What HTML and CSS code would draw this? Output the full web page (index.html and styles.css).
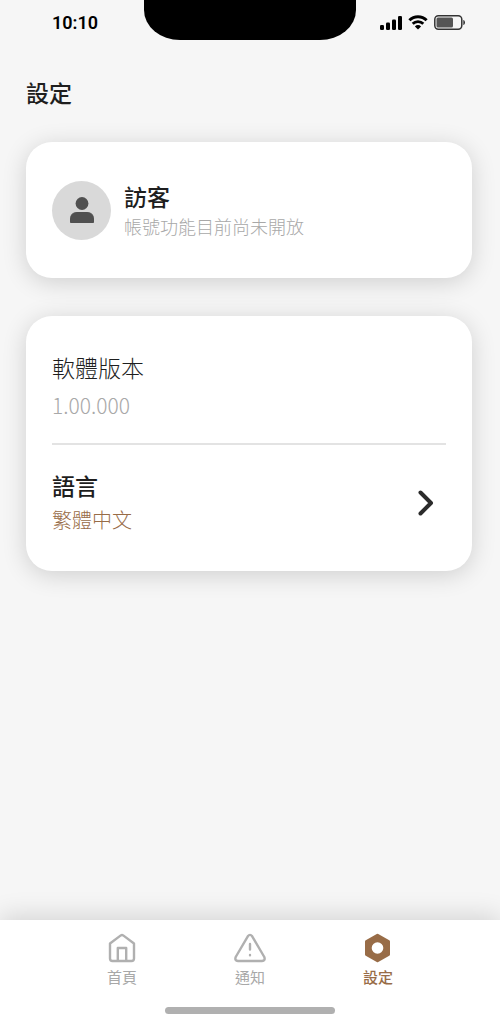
FILE: index.html
```
<!DOCTYPE html>
<html lang="zh-Hant">
<head>
  <meta charset="UTF-8">
  <meta name="viewport" content="width=device-width, initial-scale=1.0">
  <title>設定</title>
  <link rel="stylesheet" href="styles.css">
</head>
<body>
  <div class="status-bar">
    <span class="time">10:10</span>
    <div class="notch"></div>
    <div class="status-icons">
      <svg width="22" height="14" viewBox="0 0 22 14">
        <rect x="0" y="9" width="4" height="5" rx="1.3" />
        <rect x="6" y="6.5" width="4" height="7.5" rx="1.3" />
        <rect x="12" y="3.5" width="4" height="10.5" rx="1.3" />
        <rect x="18" y="0" width="4" height="14" rx="1.3" />
      </svg>
      <svg width="20" height="15" viewBox="0 0 20 15">
        <path d="M1.4 5.2 A12.2 12.2 0 0 1 18.6 5.2" fill="none" stroke="#000" stroke-width="3" />
        <path d="M4.7 8.8 A7.5 7.5 0 0 1 15.3 8.8" fill="none" stroke="#000" stroke-width="2.8" />
        <path d="M6.9 11.4 A4.4 4.4 0 0 1 13.1 11.4 L10 14.6 Z" />
      </svg>
      <svg width="32" height="15" viewBox="0 0 32 15">
        <rect x="0.8" y="0.8" width="27" height="13.4" rx="3.6" fill="none" stroke="#333" stroke-width="1.5" />
        <rect x="2.5" y="2.6" width="16.5" height="9.8" rx="1.5" fill="#555" />
        <path d="M29.3 5 C31.6 5.6 31.6 9.4 29.3 10 Z" fill="#333" />
      </svg>
    </div>
  </div>

  <main class="content">
    <h1>設定</h1>

    <section class="card profile">
      <div class="avatar">
        <svg width="24" height="26" viewBox="0 0 24 26" fill="#505050">
          <circle cx="12" cy="6.5" r="6.4" />
          <path d="M0.5 25.5 V22 Q0.5 15.5 7 15.5 H17 Q23.5 15.5 23.5 22 V25.5 Z" stroke="#505050" stroke-linejoin="round" />
        </svg>
      </div>
      <div>
        <h2 class="name">訪客</h2>
        <p class="hint">帳號功能目前尚未開放</p>
      </div>
    </section>

    <section class="card">
      <div class="row">
        <h2 class="light">軟體版本</h2>
        <p class="version">1.00.000</p>
      </div>
      <button type="button" class="row language">
        <span>
          <span class="label">語言</span>
          <span class="value">繁體中文</span>
        </span>
        <svg width="16" height="26" viewBox="0 0 16 26" fill="none" stroke="#2b2b2b" stroke-width="4" stroke-linecap="round" stroke-linejoin="round">
          <path d="M2.5 2.5 L13 13 L2.5 23.5" />
        </svg>
      </button>
    </section>
  </main>

  <footer class="tab-bar">
    <nav class="tabs">
      <a href="#home" class="tab">
        <svg width="32" height="30" viewBox="0 0 32 30" fill="none" stroke="#b0b0b0" stroke-width="2.4" stroke-linejoin="round">
          <path d="M4 10.5 L14.8 2.4 Q16 1.6 17.2 2.4 L28 10.5 V25.5 Q28 28 25.5 28 H6.5 Q4 28 4 25.5 Z" />
          <path d="M11.8 28 V15 H20.2 V28" />
        </svg>
        首頁
      </a>
      <a href="#notice" class="tab">
        <svg width="32" height="30" viewBox="0 0 32 30" fill="none" stroke="#b0b0b0" stroke-width="2.4" stroke-linecap="round" stroke-linejoin="round">
          <path d="M13.8 3.3 Q16 0.4 18.2 3.3 L30.3 24 Q31.6 27.8 28 28 H4 Q0.4 27.8 1.7 24 Z" />
          <path d="M16 11 V16.5 M16 22 V22.2" />
        </svg>
        通知
      </a>
      <a href="#settings" class="tab active">
        <svg width="32" height="30" viewBox="0 0 32 30">
          <path fill="#986c47" stroke="#986c47" stroke-width="3" stroke-linejoin="round" d="M15.5 2.3 L26.5 8.6 V21.4 L15.5 27.7 L4.5 21.4 V8.6 Z" />
          <circle cx="15.5" cy="15" r="5.8" fill="#fff" />
        </svg>
        設定
      </a>
    </nav>
    <div class="home-indicator"></div>
  </footer>
</body>
</html>
```

FILE: styles.css
```
* {
  box-sizing: border-box;
}

body {
  display: flex;
  flex-direction: column;
  min-height: 100vh;
  margin: 0;
  background-color: #f6f6f6;
  color: #1e1e1e;
  font-family: "Noto Sans CJK TC", "Noto Sans", sans-serif;
}

h1,
h2,
p {
  margin: 0;
}

svg {
  display: block;
}

/* status bar */
.status-bar {
  display: grid;
  grid-template-columns: 1fr 212px 1fr;
  height: 40px;
}

.time {
  padding: 11px 0 0 52px;
  color: #000;
  font-family: Roboto, sans-serif;
  font-size: 18px;
  font-weight: 600;
  line-height: 24px;
}

.notch {
  background-color: #000;
  border-radius: 0 0 36px 36px / 0 0 30px 30px;
}

.status-icons {
  display: flex;
  justify-content: flex-end;
  align-items: center;
  gap: 6px;
  padding: 5px 34px 0 0;
}

/* content */
.content {
  flex: 1;
  padding: 36px 28px 38px 26px;
}

h1,
h2,
.label {
  font-size: 23px;
  font-weight: 500;
  line-height: 32px;
}

h1 {
  margin-bottom: 34px;
}

.card {
  padding: 35px 26px;
  background-color: #fff;
  border-radius: 26px;
  box-shadow: 0 4px 24px rgba(0, 0, 0, 0.16);
}

.card + .card {
  margin-top: 38px;
}

.profile {
  display: flex;
  align-items: center;
  gap: 13px;
  padding: 38px 26px;
}

.avatar {
  display: flex;
  justify-content: center;
  align-items: center;
  width: 59px;
  height: 59px;
  background-color: #d9d9d9;
  border-radius: 50%;
}

.hint {
  color: #a8a8a8;
  font-size: 18px;
  font-weight: 300;
  line-height: 28px;
}

.row + .row {
  border-top: 2px solid #e3e3e3;
}

h2.light {
  font-weight: 300;
}

.version {
  margin-top: 3px;
  padding-bottom: 19px;
  color: #a8a8a8;
  font-size: 21px;
  font-weight: 300;
  line-height: 38px;
}

.language {
  display: flex;
  justify-content: space-between;
  align-items: center;
  width: 100%;
  padding: 24px 12px 0 0;
  background: none;
  border: none;
  color: inherit;
  font-family: inherit;
  text-align: left;
  cursor: pointer;
}

.label,
.value {
  display: block;
}

.value {
  margin-top: 3px;
  color: #986c47;
  font-size: 20px;
  font-weight: 300;
  line-height: 32px;
}

/* bottom tabs */
.tab-bar {
  padding: 13px 58px 10px;
  background-color: #fff;
  box-shadow: 0 -4px 24px rgba(0, 0, 0, 0.14);
}

.tabs {
  display: flex;
}

.tab {
  display: flex;
  flex: 1;
  flex-direction: column;
  align-items: center;
  color: #a8a8a8;
  font-size: 15px;
  line-height: 28px;
  text-decoration: none;
}

.tab.active {
  color: #986c47;
  font-weight: 500;
}

.home-indicator {
  width: 170px;
  height: 7px;
  margin: 16px auto 0;
  background-color: #b0b0b0;
  border-radius: 4px;
}
```
